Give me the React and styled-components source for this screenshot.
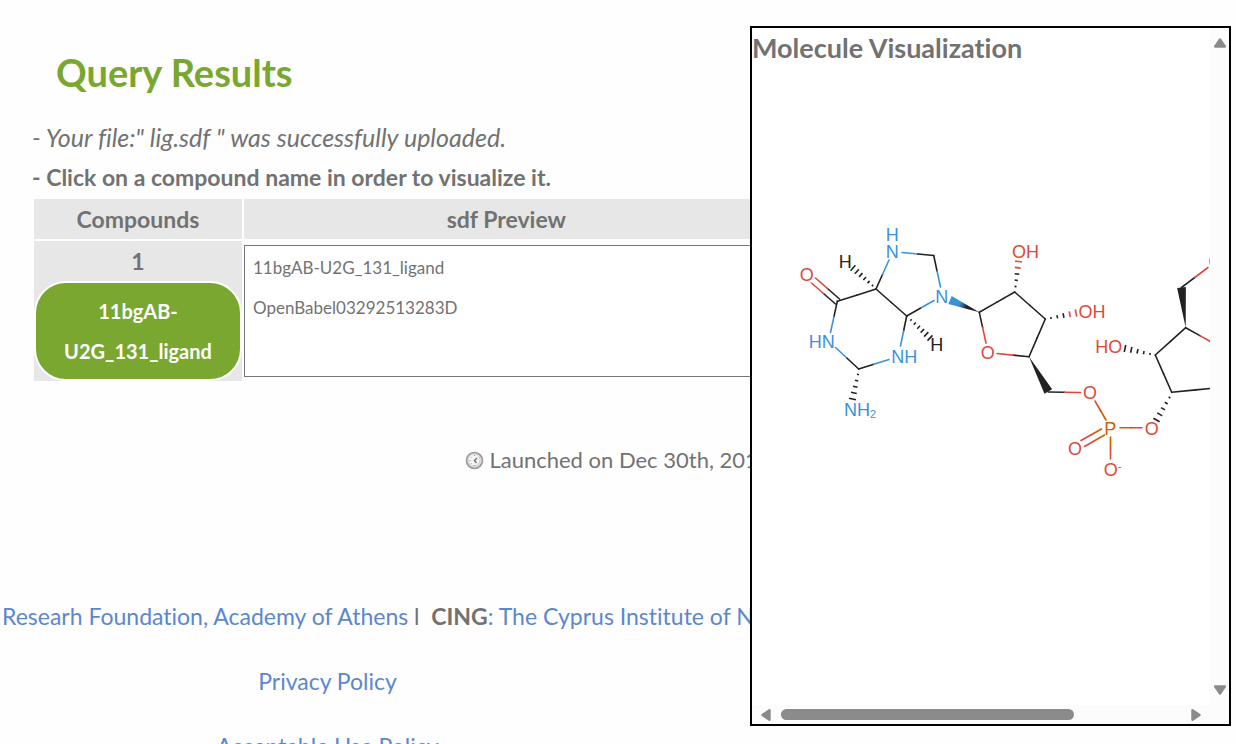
import React from "react";
import styled, { createGlobalStyle } from "styled-components";

const GREEN = "#79a72f";
const GREY = "#727272";
const BLUE = "#5b87d0";

const GlobalStyle = createGlobalStyle`
  * { box-sizing: border-box; }
  html, body { margin: 0; height: 100%; overflow: hidden; }
  body {
    background: #fefefe;
    color: ${GREY};
    font: 23px/40px Lato, "Liberation Sans", sans-serif;
    font-variant-ligatures: none;
  }
`;

const Page = styled.div`
  display: flex;
  flex-direction: column;
`;

const Results = styled.main`
  width: 63%;
  padding: 47px 8px 0 32px;
`;

const Title = styled.h1`
  margin: 0 0 20px;
  padding-left: 24px;
  font-size: 38px;
  line-height: 50px;
  font-weight: 700;
  color: ${GREEN};
`;

const Message = styled.p`
  margin: 0;
  white-space: nowrap;
  font-size: ${(p) => (p.$italic ? "25px" : "23px")};
  font-style: ${(p) => (p.$italic ? "italic" : "normal")};
  font-weight: ${(p) => (p.$bold ? 700 : 400)};
`;

const Table = styled.table`
  width: 100%;
  border-spacing: 2px;
  table-layout: fixed;
`;

const HeadCell = styled.th`
  width: ${(p) => p.$width || "auto"};
  padding: 0;
  background: #e7e7e7;
  font-weight: 700;
`;

const NameCell = styled.td`
  padding: 0;
  background: #e7e7e7;
  text-align: center;
  font-weight: 700;
`;

const PreviewCell = styled.td`
  padding: 0;
`;

const CompoundButton = styled.button`
  display: block;
  width: 100%;
  padding: 8px 20px;
  border: 2px solid #fff;
  border-radius: 32px;
  background: ${GREEN};
  color: #fff;
  font: inherit;
  font-size: 20px;
  line-height: 40px;
`;

const Preview = styled.textarea`
  display: block;
  width: 100%;
  height: 132px;
  padding: 2px 8px;
  border: 1px solid #767676;
  resize: none;
  overflow: hidden;
  background: #fff;
  color: ${GREY};
  font: inherit;
  font-size: 17px;
  line-height: 40px;
`;

const Launched = styled.p`
  display: flex;
  align-items: center;
  justify-content: center;
  gap: 5px;
  margin: 57px 0 116px;
  font-size: 22px;
`;

const Footer = styled.footer`
  display: flex;
  flex-direction: column;
  gap: 25px;
  white-space: nowrap;
`;

const Partners = styled.div`
  padding-left: 2px;
`;

const PolicyLine = styled.div`
  width: 53%;
  text-align: center;
`;

const Link = styled.a`
  color: ${BLUE};
  text-decoration: none;
`;

const Panel = styled.section`
  position: fixed;
  top: 26px;
  right: 5px;
  width: 481px;
  height: 700px;
  display: grid;
  grid-template: 1fr 19px / 1fr 19px;
  border: 2px solid #000;
  background: #fcfcfc;
`;

const PanelBody = styled.div`
  overflow: hidden;
  background: #fff;
`;

const PanelTitle = styled.h2`
  margin: 0;
  font-size: 27px;
  line-height: 40px;
  font-weight: 700;
  white-space: nowrap;
`;

const Drawing = styled.svg`
  display: block;
  font-family: "Liberation Sans", Arial, sans-serif;
  font-size: 18px;
`;

const Bar = styled.div`
  display: flex;
  flex-direction: ${(p) => (p.$vertical ? "column" : "row")};
  align-items: center;
  justify-content: space-between;
  padding: ${(p) => (p.$vertical ? "9px 0" : "0 8px")};
`;

const Thumb = styled.div`
  width: 293px;
  height: 11px;
  margin: 0 auto 0 9px;
  border-radius: 6px;
  background: #8b8b8b;
`;

const ArrowButton = styled.button`
  display: flex;
  padding: 0;
  border: 0;
  background: none;
  transform: rotate(${(p) => p.$turn}deg);
`;

function Arrow({ turn, label }) {
  return (
    <ArrowButton $turn={turn} aria-label={label}>
      <svg width="12" height="12" viewBox="0 0 12 12">
        <path d="M6 2.5 L10.8 9.5 H1.2 Z" fill="#8b8b8b" stroke="#8b8b8b" strokeWidth="2.4" strokeLinejoin="round" />
      </svg>
    </ArrowButton>
  );
}

function Clock() {
  return (
    <svg width="19" height="19" viewBox="0 0 19 19" aria-hidden="true">
      <circle cx="9.5" cy="9.5" r="8" fill="#dcdcdc" stroke="#999" strokeWidth="1.6" />
      <circle cx="9" cy="9" r="6" fill="#f4f4f4" stroke="#cfcfcf" strokeWidth="1" />
      <path d="M12 7 L9.5 9.5 L11.5 12" fill="none" stroke="#777" strokeWidth="1.5" />
      <path d="M9.5 4v1M4.5 9.5h1M9.5 14v1M6 6l.6.6M6 13l.6-.6" stroke="#999" />
    </svg>
  );
}

const C = "#222";
const N = "#3b92dc";
const O = "#e0493a";
const P = "#d05e00";

function Bond({ from, to, a = C, b = a }) {
  const mid = [(from[0] + to[0]) / 2, (from[1] + to[1]) / 2];
  return (
    <g strokeWidth="1.6" strokeLinecap="round">
      <line x1={from[0]} y1={from[1]} x2={mid[0]} y2={mid[1]} stroke={a} />
      <line x1={mid[0]} y1={mid[1]} x2={to[0]} y2={to[1]} stroke={b} />
    </g>
  );
}

function offsets(from, to) {
  const dx = to[0] - from[0];
  const dy = to[1] - from[1];
  const len = Math.hypot(dx, dy);
  return { dx, dy, nx: -dy / len, ny: dx / len };
}

function Hash({ from, to, a = C, b = a, count = 5 }) {
  const { dx, dy, nx, ny } = offsets(from, to);
  return (
    <g strokeWidth="1.6">
      {Array.from({ length: count }, (_, i) => {
        const t = i / (count - 1);
        const half = 1 + t * 2.6;
        const x = from[0] + dx * t;
        const y = from[1] + dy * t;
        return (
          <line
            key={i}
            x1={x - nx * half}
            y1={y - ny * half}
            x2={x + nx * half}
            y2={y + ny * half}
            stroke={t > 0.55 ? b : a}
          />
        );
      })}
    </g>
  );
}

function Wedge({ from, to, fill = C }) {
  const { nx, ny } = offsets(from, to);
  const w = 4.4;
  const points = [from, [to[0] + nx * w, to[1] + ny * w], [to[0] - nx * w, to[1] - ny * w]];
  return <polygon points={points.map((p) => p.join(",")).join(" ")} fill={fill} />;
}

function Atom({ x, y, color = C, children }) {
  return (
    <text x={x} y={y + 6} textAnchor="middle" fill={color}>
      {children}
    </text>
  );
}

function Molecule() {
  return (
    <Drawing width="720" height="620" viewBox="752 68 720 620" role="img" aria-label="Structure of 11bgAB-U2G_131_ligand">
      <defs>
        <linearGradient id="wedge" gradientUnits="userSpaceOnUse" x1="949" y1="299" x2="979" y2="312">
          <stop offset="0.35" stopColor={N} />
          <stop offset="0.6" stopColor={C} />
        </linearGradient>
      </defs>

      <Bond from={[876, 289]} to={[889, 260]} a={C} b={N} />
      <Bond from={[902, 252.5]} to={[933.7, 255.5]} a={N} b={C} />
      <Bond from={[933.7, 255.5]} to={[940.5, 287]} a={C} b={N} />
      <Bond from={[934, 300.5]} to={[906.7, 316]} a={N} b={C} />
      <Bond from={[906.7, 316]} to={[876, 289]} />
      <Bond from={[876, 289]} to={[837.3, 301.3]} />
      <Bond from={[839.5, 299]} to={[815.5, 278]} a={C} b={O} />
      <Bond from={[835.5, 304]} to={[811.5, 283]} a={C} b={O} />
      <Bond from={[837.3, 301.3]} to={[830.5, 332.5]} a={C} b={N} />
      <Bond from={[835.5, 347.5]} to={[858.7, 369]} a={N} b={C} />
      <Bond from={[858.7, 369]} to={[889, 359.5]} a={C} b={N} />
      <Bond from={[906.7, 316]} to={[900.5, 346]} a={C} b={N} />
      <Hash from={[872.5, 285.5]} to={[853, 268]} count={6} />
      <Hash from={[911, 320]} to={[930, 338]} count={6} />
      <Hash from={[858, 374.5]} to={[852.5, 399]} />
      <Wedge from={[979.3, 312.3]} to={[950, 300]} fill="url(#wedge)" />

      <Bond from={[979.3, 312.3]} to={[1014.7, 292]} />
      <Bond from={[1014.7, 292]} to={[1045.3, 319]} />
      <Bond from={[1045.3, 319]} to={[1029, 356.7]} />
      <Bond from={[1029, 356.7]} to={[997, 353.5]} a={C} b={O} />
      <Bond from={[979.3, 312.3]} to={[986, 343]} a={C} b={O} />
      <Hash from={[1015.5, 286.5]} to={[1018.5, 261.5]} b={O} />
      <Hash from={[1051, 318]} to={[1076, 313]} b={O} />
      <Wedge from={[1029, 356.7]} to={[1048.3, 391.5]} />
      <Bond from={[1048.3, 392]} to={[1080.5, 392.5]} a={C} b={O} />
      <Bond from={[1095, 401]} to={[1106, 420]} a={O} b={P} />
      <Bond from={[1120, 427.8]} to={[1142, 427.8]} a={P} b={O} />
      <Bond from={[1110.5, 437]} to={[1110.5, 459]} a={P} b={O} />
      <Bond from={[1101.5, 429]} to={[1081, 440.5]} a={P} b={O} />
      <Bond from={[1104.5, 435]} to={[1084.5, 446.5]} a={P} b={O} />
      <Hash from={[1169.5, 397.5]} to={[1156.5, 420]} />

      <Bond from={[1171.7, 392.3]} to={[1155.3, 355]} />
      <Bond from={[1155.3, 355]} to={[1185.7, 327.7]} />
      <Bond from={[1171.7, 392.3]} to={[1220, 387.5]} />
      <Bond from={[1185.7, 327.7]} to={[1215, 344]} a={C} b={O} />
      <Hash from={[1150, 354]} to={[1125, 348.5]} />
      <Wedge from={[1185.7, 327.7]} to={[1181.5, 287.5]} />
      <Bond from={[1181.5, 287.5]} to={[1208, 267.5]} a={C} b={O} />

      <Atom x={892.3} y={234.5} color={N}>H</Atom>
      <Atom x={892.3} y={252} color={N}>N</Atom>
      <Atom x={845.3} y={262}>H</Atom>
      <Atom x={806.7} y={274.7} color={O}>O</Atom>
      <Atom x={941.7} y={297} color={N}>N</Atom>
      <Atom x={821.7} y={342} color={N}>HN</Atom>
      <Atom x={904.3} y={357} color={N}>NH</Atom>
      <Atom x={860} y={410} color={N}>
        NH<tspan fontSize="11" dy="2">2</tspan>
      </Atom>
      <Atom x={936.7} y={345}>H</Atom>
      <Atom x={987.7} y={353} color={O}>O</Atom>
      <Atom x={1025.5} y={252} color={O}>OH</Atom>
      <Atom x={1092} y={312} color={O}>OH</Atom>
      <Atom x={1108.7} y={347} color={O}>HO</Atom>
      <Atom x={1090} y={392.7} color={O}>O</Atom>
      <Atom x={1110.3} y={429} color={P}>P</Atom>
      <Atom x={1075} y={449} color={O}>O</Atom>
      <Atom x={1151.7} y={428.7} color={O}>O</Atom>
      <Atom x={1112.5} y={469.7} color={O}>
        O<tspan fontSize="11" dy="-6">-</tspan>
      </Atom>
      <Atom x={1215.5} y={262} color={O}>O</Atom>
    </Drawing>
  );
}

export default function App() {
  return (
    <Page>
      <GlobalStyle />
      <Results>
        <Title>Query Results</Title>
        <Message $italic>- Your file:" lig.sdf " was successfully uploaded.</Message>
        <Message $bold>- Click on a compound name in order to visualize it.</Message>
        <Table>
          <thead>
            <tr>
              <HeadCell $width="208px">Compounds</HeadCell>
              <HeadCell>sdf Preview</HeadCell>
            </tr>
          </thead>
          <tbody>
            <tr>
              <NameCell>
                1
                <CompoundButton>11bgAB-U2G_131_ligand</CompoundButton>
              </NameCell>
              <PreviewCell>
                <Preview
                  readOnly
                  aria-label="sdf Preview"
                  value={"11bgAB-U2G_131_ligand\nOpenBabel03292513283D"}
                />
              </PreviewCell>
            </tr>
          </tbody>
        </Table>
      </Results>
      <Launched>
        <Clock />
        Launched on Dec 30th, 2015
      </Launched>
      <Footer>
        <Partners>
          <Link href="#athens">Researh Foundation, Academy of Athens</Link> l&nbsp; <strong>CING</strong>
          <Link href="#cing">: The Cyprus Institute of Neurology</Link>
        </Partners>
        <PolicyLine>
          <Link href="#privacy">Privacy Policy</Link>
        </PolicyLine>
        <PolicyLine>
          <Link href="#use">Acceptable Use Policy</Link>
        </PolicyLine>
      </Footer>
      <Panel>
        <PanelBody>
          <PanelTitle>Molecule Visualization</PanelTitle>
          <Molecule />
        </PanelBody>
        <Bar $vertical>
          <Arrow turn={0} label="Scroll up" />
          <Arrow turn={180} label="Scroll down" />
        </Bar>
        <Bar>
          <Arrow turn={-90} label="Scroll left" />
          <Thumb />
          <Arrow turn={90} label="Scroll right" />
        </Bar>
      </Panel>
    </Page>
  );
}
